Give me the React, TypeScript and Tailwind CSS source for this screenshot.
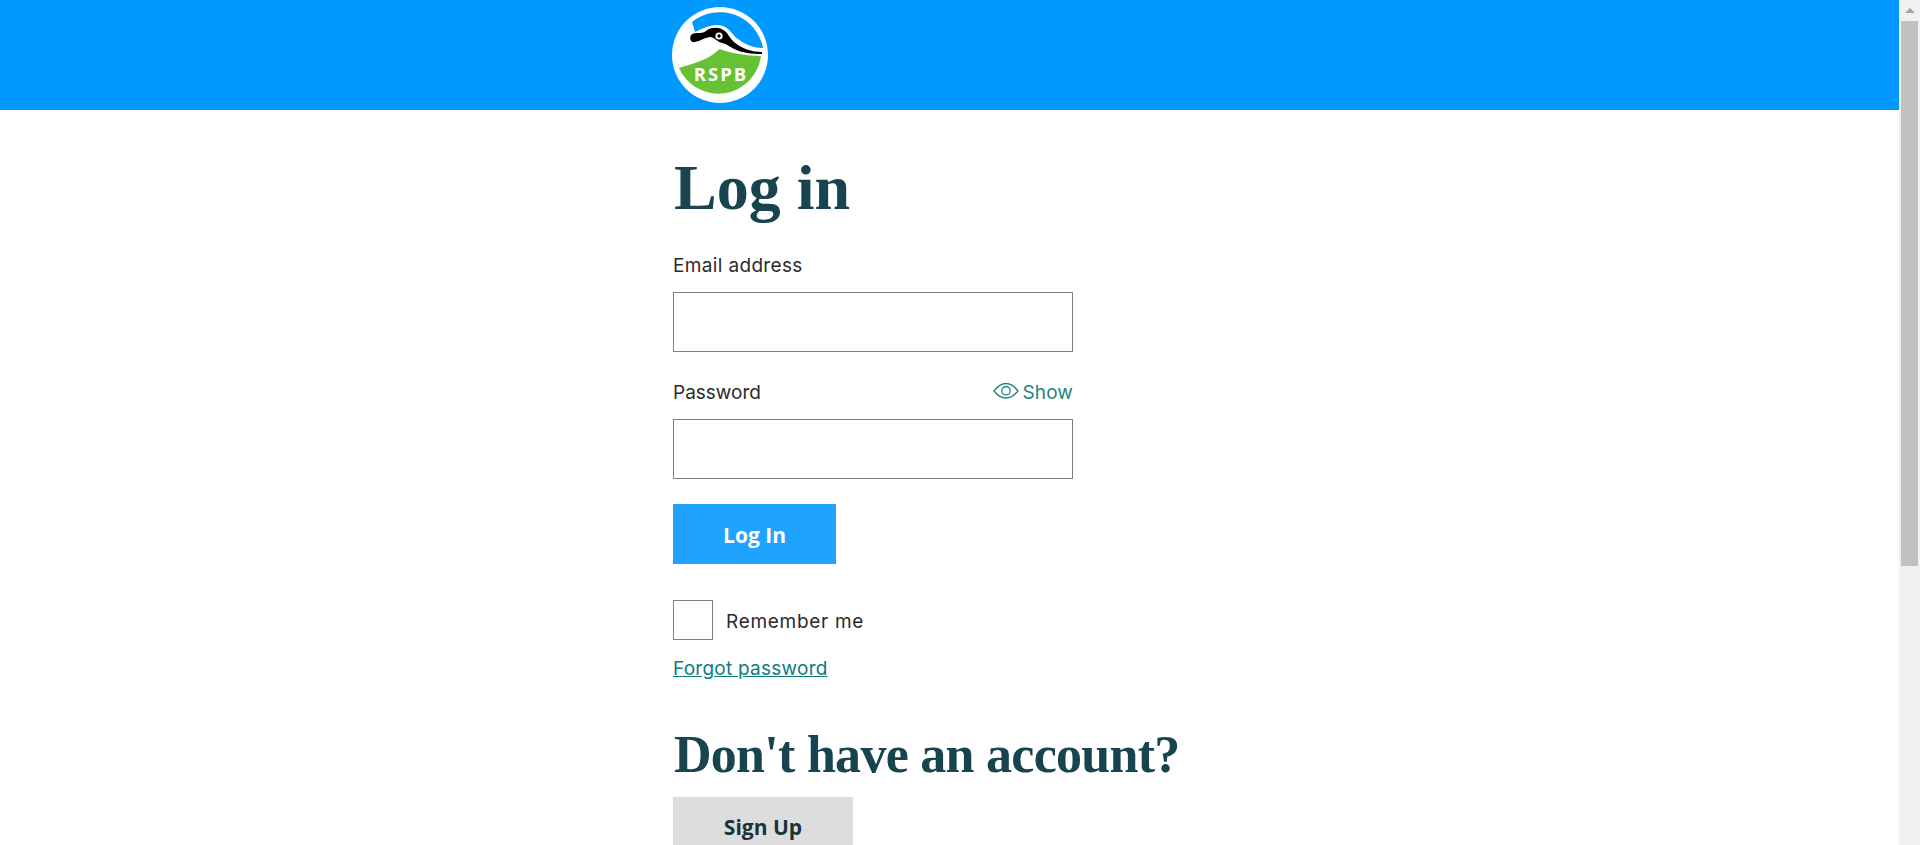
import React from 'react';

const Logo = () => (
  <svg width="96" height="96" viewBox="0 0 96 96" className="block">
    <circle cx="48" cy="48" r="48" fill="#fff" />
    <path d="M20 15 A44 44 0 0 1 91 41 C80 41 71 36 64.5 31 C60 27 58 22 51 19 C43 16 33 20 23 25 Z" fill="#0099ff" />
    <path d="M7 61 C18 57 36 54 47.5 42 C58 46 74 49 89 49 A43 43 0 0 1 7 61 Z" fill="#66c133" />
    <path d="M19 28 C24 24 28 28 34 24 C40 19 50 20 55 26 C58 31 61 35 66 38 C72 42 80 45 90 45 L90 47 C80 47 70 46 62 42 C58 40 55 37 50 36 C44 34 42 30 38 30 C32 31 28 34 23 35 C19 36 17 32 19 28 Z" fill="#000" />
    <circle cx="47" cy="29" r="3.6" fill="#fff" />
    <circle cx="47" cy="29" r="1.7" fill="#000" />
    <text x="49" y="74" textAnchor="middle" fill="#fff" className="font-['Open_Sans',sans-serif] font-bold text-[18.5px] tracking-[2px]">RSPB</text>
  </svg>
);

const EyeIcon = () => (
  <svg width="26" height="18" viewBox="0 0 26 18" fill="none" stroke="#24827f" strokeWidth="1.3" className="-translate-y-[2px] -translate-x-[1px]">
    <path d="M1 9 C5 3.5 9 1.5 13 1.5 C17 1.5 21 3.5 25 9 C21 14 17 16 13 16 C9 16 5 14 1 9 Z" />
    <circle cx="13" cy="8.7" r="4.2" />
  </svg>
);

const ScrollBar = () => (
  <div className="w-[21px] h-full shrink-0 bg-[#f1f1f1] flex flex-col">
    <div className="h-[21px] flex items-center justify-center">
      <div className="w-0 h-0 border-x-[5px] border-x-transparent border-b-[5px] border-b-[#a3a3a3]" />
    </div>
    <div className="h-[545px] mx-[2px] bg-[#c1c1c1]" />
  </div>
);

export default function App() {
  return (
    <div className="flex h-[845px] overflow-hidden bg-white font-['Inter',sans-serif]">
      <main className="flex-1 min-w-0 overflow-hidden">
        <header className="h-[110px] bg-[#0099ff] pl-[672px] pt-[7px]">
          <Logo />
        </header>
        <div className="w-[400px] ml-[673px]">
          <h1 className="mt-[43px] h-[70px] pl-[1px] text-[#17444f] font-['Liberation_Serif',serif] font-bold text-[64px] leading-[70px]">Log in</h1>
          <form>
            <label className="block mt-[31px] text-[19px] leading-[24px] tracking-[0.35px] text-[#2b2b2b]">Email address</label>
            <input type="text" className="block mt-[14px] w-full h-[60px] border border-[#808080] bg-white" />
            <div className="flex justify-between items-center mt-[29px] h-[24px]">
              <label className="text-[19px] leading-[24px] text-[#2b2b2b]">Password</label>
              <span className="flex items-center text-[19px] leading-[24px] tracking-[0.1px] text-[#24827f]">
                <EyeIcon />
                <span className="ml-[3px]">Show</span>
              </span>
            </div>
            <input type="password" className="block mt-[14px] w-full h-[60px] border border-[#808080] bg-white" />
            <button type="button" className="block mt-[25px] w-[163px] h-[60px] pt-[3px] bg-[#1fa3ff] text-white font-['Open_Sans',sans-serif] font-bold text-[21px]">Log In</button>
            <div className="flex items-center mt-[36px]">
              <div className="w-[40px] h-[40px] border border-[#808080] bg-white" />
              <span className="ml-[13px] translate-y-[2px] text-[19px] tracking-[0.7px] text-[#2b2b2b]">Remember me</span>
            </div>
            <a className="block mt-[17px] text-[19px] leading-[24px] tracking-[0.25px] text-[#0d7c7c] underline">Forgot password</a>
          </form>
          <h2 className="mt-[44px] pl-[1px] whitespace-nowrap text-[#17444f] font-['Liberation_Serif',serif] font-bold text-[52px] leading-[60px] tracking-[-0.72px]">Don't have an account?</h2>
          <button type="button" className="block mt-[12px] w-[180px] h-[60px] pt-[2px] bg-[#dddddd] text-[#17343f] font-['Open_Sans',sans-serif] font-bold text-[21px]">Sign Up</button>
        </div>
      </main>
      <ScrollBar />
    </div>
  );
}
